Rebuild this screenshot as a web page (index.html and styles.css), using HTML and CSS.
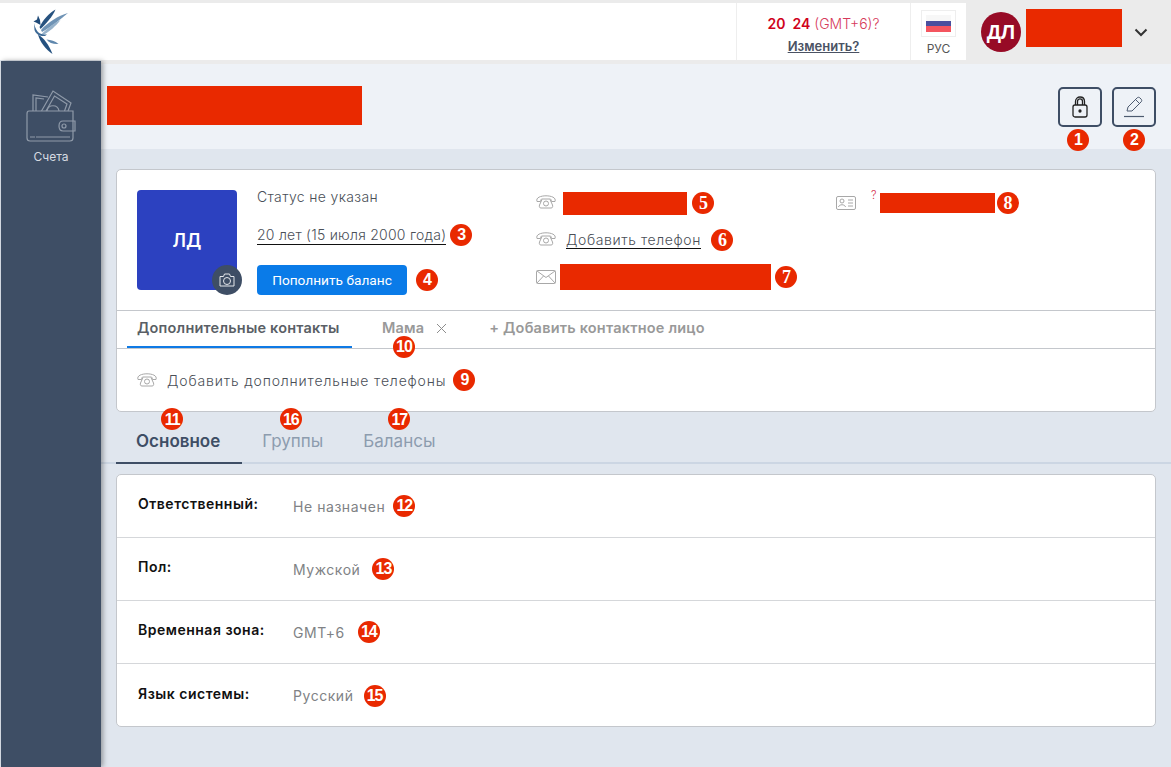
FILE: index.html

```html
<!DOCTYPE html>
<html lang="en">
<head>
    <meta charset="UTF-8">
    <title>Профиль клиента</title>
    <link rel="stylesheet" href="styles.css">
</head>
<body>
    <svg class="defs" width="0" height="0">
        <symbol id="phone-icon" viewBox="0 0 20 14">
            <path d="M1 6.500 C-0.500 2.500 5 0.800 10 0.800 C15 0.800 20.500 2.500 19 6.500 L15.500 6.500 C15.500 5 15 4 14 4 H6 C5 4 4.500 5 4.500 6.500 Z" fill="none" stroke="#a8a8a8"/>
            <path d="M6 4.500 L3.500 10 C3 12 3.500 13 5 13 H15 C16.500 13 17 12 16.500 10 L14 4.500" fill="none" stroke="#a8a8a8"/>
            <circle cx="10" cy="8.500" r="2.500" fill="none" stroke="#a8a8a8"/>
        </symbol>
    </svg>

    <header class="topbar">
        <div class="logo">
            <svg width="36" height="46" viewBox="0 0 36 46">
                <path d="M0.500 12.500 L4 10.500 L5 6.500 L7 11 L7.500 16 L3 13.500 Z" fill="#1f4a78"/>
                <path d="M6.500 18 C10 11 16 4 22.500 0.500 C20 7 13 15 7.500 20 Z" fill="#27527f"/>
                <path d="M8 21 C15 13 25 7 35 4 C28 10 18 18 9 23 Z" fill="#6f93b5"/>
                <path d="M9 24.500 C15 19 21 14 27.500 11 C23 17 16 23 10 26 Z" fill="#97b2ca"/>
                <path d="M1 14 C2 19 4 23 7 24.500 C9 25.500 12 25.500 14 25.500 L12 27 C8 27.500 3 26 1.500 21 Z" fill="#3d6a96"/>
                <path d="M5 25.500 C11 29 16 36 19.500 45 C13 41 7 33 5 25.500 Z" fill="#23507f"/>
                <path d="M13.500 30.500 C18 31 22 32 25.500 35 C21 35.500 16 34 13.500 30.500 Z" fill="#5f87ad"/>
            </svg>
        </div>
        <div class="time-box">
            <div class="time-line"><b>20&nbsp; 24</b> (GMT+6)?</div>
            <a class="time-change">Изменить?</a>
        </div>
        <div class="lang-box">
            <div class="flag"><span class="flag-stripes"></span></div>
            <div class="lang-name">РУС</div>
        </div>
        <div class="user-box">
            <div class="user-avatar">ДЛ</div>
            <div class="redact user-name"></div>
            <svg class="chevron" width="14" height="9" viewBox="0 0 14 9" fill="none" stroke="#333" stroke-width="2">
                <path d="M1.500 1.500 L7 7 L12.500 1.500"/>
            </svg>
        </div>
    </header>

    <div class="layout">
        <nav class="sidebar">
            <svg width="50" height="52" viewBox="0 0 50 52" fill="none" stroke="#8f9aa9" stroke-width="1.200">
                <path d="M7 21 L7 5 L22 7"/>
                <path d="M10 21 L10 8 L18 9"/>
                <path d="M15.500 21 L27 1 L45 13 L42 21"/>
                <path d="M20 21 L28.500 6 L41 14 L38.500 21"/>
                <path d="M21 21 C22 14 32 14 33 21"/>
                <path d="M3 21 C1.500 21 1 22 1 24 V48 C1 50 2 51 4 51 H44 C46 51 47 50 47 48 V21 Z"/>
                <path d="M37 31 H49 V41 H37 C34.500 41 33 39 33 36 C33 33 34.500 31 37 31 Z"/>
                <circle cx="38" cy="36" r="2"/>
                <path d="M4 47 H9 M10 47 H44"/>
            </svg>
            <span class="sidebar-label">Счета</span>
        </nav>

        <main class="content">
            <section class="page-head">
                <div class="redact page-title"></div>
                <div class="head-actions">
                    <div class="icon-btn">
                        <svg width="16" height="22" viewBox="0 0 16 22" fill="none" stroke="#222" stroke-width="1.300">
                            <rect x="1" y="9" width="14" height="12" rx="2"/>
                            <path d="M3.500 9 V5.500 C3.500 -0.500 12.500 -0.500 12.500 5.500 V9"/>
                            <path d="M5.500 9 V5.500 C5.500 2 10.500 2 10.500 5.500 V9"/>
                            <circle cx="8" cy="15" r="1" fill="#222"/>
                        </svg>
                        <span class="badge badge-under badge-lock">1</span>
                    </div>
                    <div class="icon-btn">
                        <svg width="20" height="22" viewBox="0 0 20 22" fill="none" stroke="#4d5b70" stroke-width="1">
                            <path d="M3 15 L4 11 L13 2 C14 1 15 1 16 2 L17 3 C18 4 18 5 17 6 L8 15 Z"/>
                            <path d="M11.500 3.500 L15.500 7.500"/>
                            <path d="M0 20.500 H20" stroke-width="1.200"/>
                        </svg>
                        <span class="badge badge-under">2</span>
                    </div>
                </div>
            </section>

            <section class="card card-profile">
                <div class="profile-top">
                    <div class="avatar">
                        ЛД
                        <span class="avatar-photo">
                            <svg width="16" height="14" viewBox="0 0 16 14" fill="none" stroke="#e4e7eb" stroke-width="1">
                                <path d="M1 3.500 H4.500 L5.500 1 H10.500 L11.500 3.500 H15 V13 H1 Z"/>
                                <circle cx="8" cy="8" r="3.500"/>
                            </svg>
                        </span>
                    </div>
                    <div class="profile-info">
                        <div class="status">Статус не указан</div>
                        <div class="info-row info-birth"><a class="birth">20 лет (15 июля 2000 года)</a><span class="badge">3</span></div>
                        <div class="info-row info-button"><button class="top-up" type="button">Пополнить баланс</button><span class="badge badge-gap">4</span></div>
                    </div>
                    <div class="contacts">
                        <div class="contact-row">
                            <svg class="contact-icon" width="20" height="14"><use href="#phone-icon"/></svg>
                            <div class="redact phone-one"></div>
                            <span class="badge badge-serif">5</span>
                        </div>
                        <div class="contact-row contact-second">
                            <svg class="contact-icon" width="20" height="14"><use href="#phone-icon"/></svg>
                            <a class="add-phone">Добавить телефон</a>
                            <span class="badge badge-serif">6</span>
                        </div>
                        <div class="contact-row contact-third">
                            <svg class="mail" width="20" height="14" viewBox="0 0 20 14" fill="none" stroke="#a8a8a8" stroke-width="1">
                                <rect x="0.500" y="0.500" width="19" height="13" rx="1"/>
                                <path d="M1 1 L10 7.500 L19 1 M1 13 L7.500 6 M19 13 L12.500 6"/>
                            </svg>
                            <div class="redact mail-addr"></div>
                            <span class="badge badge-serif">7</span>
                        </div>
                    </div>
                    <div class="document">
                        <svg width="20" height="14" viewBox="0 0 20 14" fill="none" stroke="#a8a8a8" stroke-width="1">
                            <rect x="0.500" y="0.500" width="19" height="13" rx="1.500"/>
                            <circle cx="6" cy="5" r="2"/>
                            <path d="M2.500 11 C3 8 9 8 9.500 11 M12 4 H17 M12 7 H17 M12 10 H17"/>
                        </svg>
                        <span class="doc-mark">?</span>
                        <div class="redact doc-number"></div>
                        <span class="badge badge-serif">8</span>
                    </div>
                </div>
                <div class="contact-tabs">
                    <a class="contact-tab contact-tab-active">Дополнительные контакты</a>
                    <a class="contact-tab contact-tab-mama">Мама
                        <svg width="11" height="11" viewBox="0 0 11 11" stroke="#8d8d8d" stroke-width="1"><path d="M1 1 L10 10 M10 1 L1 10"/></svg>
                        <span class="badge badge-tab-mama">10</span>
                    </a>
                    <a class="contact-tab contact-tab-add">+ Добавить контактное лицо</a>
                </div>
                <div class="extra-phones">
                    <svg width="20" height="14"><use href="#phone-icon"/></svg>
                    <span class="extra-text">Добавить дополнительные телефоны</span>
                    <span class="badge">9</span>
                </div>
            </section>

            <div class="main-tabs">
                <a class="main-tab main-tab-active">Основное<span class="badge badge-tab badge-tab-first">11</span></a>
                <a class="main-tab">Группы<span class="badge badge-tab badge-tab-second">16</span></a>
                <a class="main-tab">Балансы<span class="badge badge-tab">17</span></a>
            </div>

            <section class="card card-fields">
                <div class="field">
                    <div class="field-label">Ответственный:</div>
                    <div class="field-value">Не назначен</div>
                    <span class="badge badge-m8">12</span>
                </div>
                <div class="field">
                    <div class="field-label">Пол:</div>
                    <div class="field-value">Мужской</div>
                    <span class="badge badge-m12">13</span>
                </div>
                <div class="field">
                    <div class="field-label">Временная зона:</div>
                    <div class="field-value">GMT+6</div>
                    <span class="badge badge-m13">14</span>
                </div>
                <div class="field">
                    <div class="field-label">Язык системы:</div>
                    <div class="field-value">Русский</div>
                    <span class="badge badge-m10">15</span>
                </div>
            </section>
        </main>
    </div>
</body>
</html>
```

FILE: styles.css

```css
* {
    box-sizing: border-box;
}
html, body {
    margin: 0;
    height: 767px;
    overflow: hidden;
}
body {
    font-family: Inter, "Noto Sans", sans-serif;
    font-size: 14px;
    color: #4a4f57;
    background-color: #e0e6ee;
}
a {
    color: inherit;
}
.defs {
    position: absolute;
}

/* redacted blocks */
.redact {
    background-color: #e92900;
    flex: none;
}

/* numbered markers */
.badge {
    display: inline-flex;
    align-items: center;
    justify-content: center;
    flex: none;
    width: 22px;
    height: 22px;
    margin-left: 4px;
    border-radius: 50%;
    background-color: #e92900;
    color: #fff;
    font-family: "Liberation Sans", Arial, sans-serif;
    font-size: 16px;
    font-weight: bold;
    letter-spacing: -1px;
}
.badge-serif {
    font-family: "Liberation Serif", serif;
    font-size: 18px;
}
.badge-gap {
    margin-left: 9px;
}
.badge-m8 {
    margin-left: 8px;
}
.badge-m10 {
    margin-left: 10px;
}
.badge-m12 {
    margin-left: 12px;
}
.badge-m13 {
    margin-left: 13px;
}
.badge-under {
    position: absolute;
    left: 9px;
    top: 40px;
    margin: 0;
}
.badge-lock {
    left: 7px;
}
.badge-tab {
    position: absolute;
    top: -4px;
    left: 50%;
    margin: 0 0 0 -11px;
}
.badge-tab-first {
    margin-left: -18px;
}
.badge-tab-second {
    margin-left: -13px;
}
.badge-tab-mama {
    position: absolute;
    top: 25px;
    left: 11px;
    margin: 0;
}

/* top bar */
.topbar {
    display: flex;
    height: 60px;
    border-top: 3px solid #ebebeb;
    background-color: #fff;
}
.logo {
    width: 736px;
    padding: 6px 0 0 33px;
}
.time-box {
    width: 175px;
    border-left: 1px solid #eee;
    border-right: 1px solid #eee;
    text-align: center;
    padding-top: 12px;
}
.time-line {
    font-size: 14px;
    line-height: 17px;
    color: #d63a5a;
    font-weight: 300;
}
.time-line b {
    color: #d0021b;
    font-weight: 600;
}
.time-change {
    display: inline-block;
    margin-top: 6px;
    font-size: 13px;
    font-weight: 600;
    text-decoration: underline;
    color: #4a5263;
}
.lang-box {
    width: 55px;
    padding-top: 7px;
    text-align: center;
}
.flag {
    width: 35px;
    height: 27px;
    margin: 0 auto;
    padding: 4px 4px;
    border: 1px solid #eee;
}
.flag-stripes {
    display: block;
    height: 17px;
    background: linear-gradient(#f7f7f7 33%, #4a4f9e 33%, #4a4f9e 66%, #f4555f 66%);
}
.lang-name {
    margin-top: 4px;
    font-size: 12px;
    color: #555;
}
.user-box {
    flex: 1;
    display: flex;
    align-items: flex-start;
    background-color: #ebebeb;
    padding: 6px 0 0 15px;
}
.user-avatar {
    display: flex;
    align-items: center;
    justify-content: center;
    width: 40px;
    height: 40px;
    margin-top: 3px;
    border-radius: 50%;
    background-color: #970b26;
    color: #fff;
    font-family: "Liberation Sans", Arial, sans-serif;
    font-size: 20px;
    font-weight: bold;
}
.user-name {
    width: 96px;
    height: 38px;
    margin-left: 5px;
}
.chevron {
    margin: 19px 0 0 12px;
}

/* page frame */
.layout {
    display: flex;
    height: 707px;
}
.sidebar {
    width: 100px;
    margin: 1px 0 0 1px;
    padding-top: 29px;
    display: flex;
    flex-direction: column;
    align-items: center;
    background-color: #3e4e65;
    box-shadow: 2px 0 5px rgba(0, 0, 0, 0.35);
    position: relative;
}
.sidebar-label {
    margin-top: 7px;
    font-size: 12px;
    color: #d5dae1;
}
.content {
    flex: 1;
    border-top: 4px solid #ebebeb;
}

.page-head {
    display: flex;
    justify-content: space-between;
    height: 85px;
    padding: 22px 15px 0 6px;
    background-color: #eef2f7;
}
.page-title {
    width: 255px;
    height: 39px;
}
.head-actions {
    display: flex;
    gap: 10px;
    padding-top: 1px;
}
.icon-btn {
    position: relative;
    display: flex;
    align-items: center;
    justify-content: center;
    width: 44px;
    height: 40px;
    border: 2px solid #3e4e65;
    border-radius: 5px;
}

.card {
    margin: 0 15px;
    background-color: #fff;
    border: 1px solid #c4c7cc;
    border-radius: 5px;
}

/* profile card */
.card-profile {
    margin-top: 20px;
    height: 243px;
}
.profile-top {
    display: flex;
    height: 141px;
    padding: 20px 0 0 20px;
    border-bottom: 1px solid #c4c7cc;
}
.avatar {
    position: relative;
    display: flex;
    align-items: center;
    justify-content: center;
    width: 100px;
    height: 100px;
    border-radius: 4px;
    background-color: #2c41c0;
    color: #fff;
    font-size: 18px;
    font-weight: 600;
}
.avatar-photo {
    position: absolute;
    right: -5px;
    bottom: -5px;
    display: flex;
    align-items: center;
    justify-content: center;
    width: 30px;
    height: 30px;
    border-radius: 50%;
    background-color: #3e4e65;
}
.profile-info {
    width: 299px;
    padding-left: 20px;
}
.status {
    line-height: 17px;
    margin-top: -2px;
    font-size: 14px;
    font-weight: 300;
    letter-spacing: 0.35px;
}
.info-row {
    display: flex;
    align-items: center;
}
.info-birth {
    margin-top: 19px;
}
.info-button {
    margin-top: 19px;
}
.birth {
    font-weight: 300;
    letter-spacing: 0.24px;
    border-bottom: 1px solid #111;
    line-height: 18px;
}
.top-up {
    width: 150px;
    height: 30px;
    border: none;
    border-radius: 4px;
    background-color: #0a7be8;
    color: #fff;
    font-family: Roboto, sans-serif;
    font-size: 13.700px;
}
.contacts {
    width: 300px;
}
.contact-row {
    display: flex;
    align-items: center;
    height: 26px;
}
.contact-icon {
    margin-top: -3px;
}
.contact-second {
    margin-top: 11px;
}
.contact-second .contact-icon {
    margin-top: -2px;
}
.contact-third {
    margin-top: 11px;
}
.phone-one {
    width: 124px;
    height: 23px;
    margin-left: 7px;
}
.phone-one + .badge {
    margin-left: 5px;
}
.add-phone {
    margin-left: 10px;
    font-weight: 300;
    letter-spacing: 0.6px;
    border-bottom: 1px solid #111;
    line-height: 17px;
}
.contact-second .badge {
    margin-left: 10px;
}
.mail-addr {
    width: 211px;
    height: 26px;
    margin-left: 4px;
}
.document {
    display: flex;
    align-items: center;
    height: 26px;
}
.doc-mark {
    align-self: flex-start;
    margin: -2px 3px 0 15px;
    font-size: 11px;
    font-weight: 300;
    color: #d6324f;
}
.doc-number {
    width: 115px;
    height: 20px;
}
.doc-number + .badge {
    margin-left: 2px;
}

/* contact tabs */
.contact-tabs {
    display: flex;
    height: 38px;
    padding-left: 10px;
    border-bottom: 1px solid #c4c7cc;
}
.contact-tab {
    position: relative;
    height: 37px;
    line-height: 34px;
    font-size: 14.500px;
    font-weight: 600;
    letter-spacing: 0.2px;
    color: #999;
}
.contact-tab-active {
    width: 225px;
    padding-left: 10px;
    border-bottom: 2px solid #0f7ae5;
    color: #5a5f66;
}
.contact-tab-mama {
    margin-left: 30px;
}
.contact-tab-mama svg {
    margin-left: 8px;
    vertical-align: -1px;
}
.contact-tab-add {
    margin-left: 42px;
}
.extra-phones {
    display: flex;
    align-items: center;
    height: 62px;
    padding-left: 20px;
}
.extra-text {
    margin-left: 10px;
    font-weight: 300;
    letter-spacing: 0.84px;
}
.extra-text + .badge {
    margin-left: 7px;
}

/* main tabs */
.main-tabs {
    display: flex;
    height: 52px;
    padding-left: 15px;
    border-bottom: 2px solid #ccd6e3;
}
.main-tab {
    position: relative;
    height: 52px;
    padding: 20px 20px 0;
    font-size: 17px;
    line-height: 19px;
    color: #8d9cae;
}
.main-tab-active {
    padding-right: 22px;
    border-bottom: 2px solid #3e4e65;
    color: #3e4e65;
    font-weight: 600;
}

/* fields card */
.card-fields {
    margin-top: 10px;
    height: 253px;
}
.field {
    display: flex;
    align-items: center;
    height: 63px;
    padding-left: 21px;
    border-bottom: 1px solid #d5d7da;
}
.field:last-child {
    border-bottom: none;
}
.field-label {
    width: 155px;
    margin-top: -5px;
    font-size: 14px;
    font-weight: 600;
    letter-spacing: 0.5px;
    color: #111;
}
.field-value {
    font-size: 14px;
    letter-spacing: 0.55px;
    color: #808285;
}
```
